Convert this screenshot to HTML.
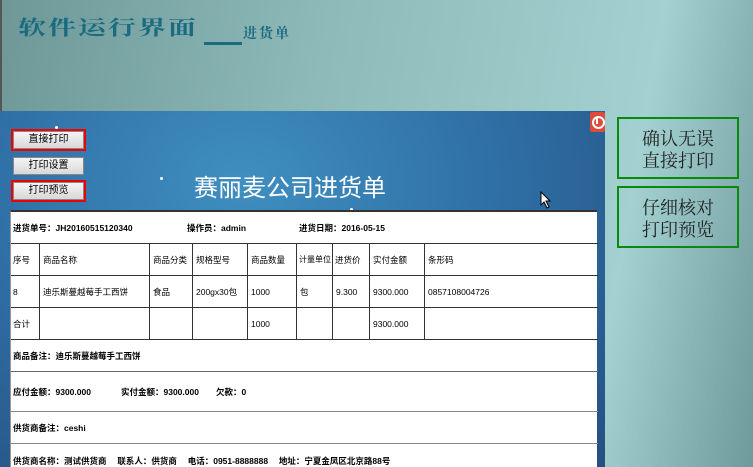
<!DOCTYPE html>
<html><head><meta charset="utf-8"><style>
*{margin:0;padding:0;box-sizing:border-box}
body{width:753px;height:467px;overflow:hidden;position:relative;font-family:"Liberation Sans","Noto Sans CJK SC",sans-serif;background:linear-gradient(100deg,#6e9898 0%,#8fbaba 40%,#a3d0d0 80%,#6f9a9c 100%);}
.lb{position:absolute;left:0;top:0;width:2px;height:111px;background:#555}
.t1{position:absolute;left:18px;top:16px;font-size:28px;line-height:30px;font-weight:bold;color:#1a6a80;letter-spacing:2px;font-family:"Noto Serif CJK SC","Noto Sans CJK SC",serif;transform:scaleY(0.72);transform-origin:left top}
.ul{position:absolute;left:204px;top:42px;width:38px;height:3px;background:#1a6a80}
.t2{position:absolute;left:243px;top:25px;font-size:14px;line-height:16px;font-weight:bold;color:#1a6a80;letter-spacing:2px;font-family:"Noto Serif CJK SC",serif}
.panel{position:absolute;left:0;top:111px;width:605px;height:356px;background:radial-gradient(ellipse at 40% 20%,#3f8fc0 0%,#2f6fa5 50%,#254f80 100%)}
.btn{position:absolute;left:13px;width:71px;height:18px;background:linear-gradient(#f4f4f4,#d8d8d8);border:1px solid #888;font-size:10px;text-align:center;line-height:16px;color:#000}
.red{outline:2px solid #e00;outline-offset:0}
.title{position:absolute;left:194px;top:168px;font-size:24px;color:#fff}
.close{position:absolute;left:590px;top:112px;width:15px;height:20px;background:#e04a3a;border-radius:2px}
.close:after{content:"";position:absolute;left:2px;top:4px;width:9px;height:9px;border:2px solid #fff;border-radius:50%}
.close:before{content:"";position:absolute;left:6px;top:6px;width:2px;height:6px;background:#fff;z-index:2}
.sheet{position:absolute;left:10px;top:210px;width:587px;height:257px;background:#fff;border-top:2px solid #333;border-left:1px solid #999}
.hl{position:absolute;left:0;width:587px;height:1px;background:#333}
.vl{position:absolute;top:33px;height:96px;width:1px;background:#333}
.tx{position:absolute;font-size:8.5px;line-height:10px;color:#000;white-space:nowrap}
.b{font-weight:bold}
.gb{position:absolute;left:617px;width:122px;border:2px solid #0a8a0a;font-size:18px;color:#222;text-align:center;line-height:22px;font-family:"Noto Serif CJK SC",serif}
.dot{position:absolute;width:3px;height:3px;background:#fff;border-radius:50%}
</style></head><body>
<div class="lb"></div>
<div class="t1">软件运行界面</div><div class="ul"></div><div class="t2">进货单</div>
<div class="panel"></div>
<div class="dot" style="left:55px;top:126px"></div>
<div class="dot" style="left:160px;top:177px"></div>
<div class="dot" style="left:350px;top:208px"></div>
<div class="btn red" style="top:131px">直接打印</div>
<div class="btn" style="top:157px">打印设置</div>
<div class="btn red" style="top:182px">打印预览</div>
<div class="title">赛丽麦公司进货单</div>
<div class="close"></div>
<svg style="position:absolute;left:540px;top:191px" width="12" height="18"><path d="M1 1 L1 14 L4 11 L7 17 L9 16 L6 10 L10 10 Z" fill="#fff" stroke="#000" stroke-width="1"/></svg>
<div class="sheet">
<div class="hl" style="top:31px"></div>
<div class="hl" style="top:63px"></div>
<div class="hl" style="top:95px"></div>
<div class="hl" style="top:127px"></div>
<div class="hl" style="top:159px;background:#666"></div>
<div class="hl" style="top:199px;background:#888"></div>
<div class="hl" style="top:231px;background:#888"></div>
<div class="vl" style="left:28px;top:31px"></div>
<div class="vl" style="left:138px;top:31px"></div>
<div class="vl" style="left:181px;top:31px"></div>
<div class="vl" style="left:236px;top:31px"></div>
<div class="vl" style="left:285px;top:31px"></div>
<div class="vl" style="left:321px;top:31px"></div>
<div class="vl" style="left:358px;top:31px"></div>
<div class="vl" style="left:413px;top:31px"></div>
<div class="tx b" style="left:2px;top:11px">进货单号：JH20160515120340</div>
<div class="tx b" style="left:176px;top:11px">操作员：admin</div>
<div class="tx b" style="left:288px;top:11px">进货日期：2016-05-15</div>
<div class="tx" style="left:2px;top:43px">序号</div>
<div class="tx" style="left:32px;top:43px">商品名称</div>
<div class="tx" style="left:142px;top:43px">商品分类</div>
<div class="tx" style="left:185px;top:43px">规格型号</div>
<div class="tx" style="left:240px;top:43px">商品数量</div>
<div class="tx" style="left:288px;top:43px;font-size:8px">计量单位</div>
<div class="tx" style="left:324px;top:43px">进货价</div>
<div class="tx" style="left:362px;top:43px">实付金额</div>
<div class="tx" style="left:417px;top:43px">条形码</div>
<div class="tx" style="left:2px;top:75px">8</div>
<div class="tx" style="left:32px;top:75px">迪乐斯蔓越莓手工西饼</div>
<div class="tx" style="left:142px;top:75px">食品</div>
<div class="tx" style="left:185px;top:75px">200gx30包</div>
<div class="tx" style="left:240px;top:75px">1000</div>
<div class="tx" style="left:289px;top:75px">包</div>
<div class="tx" style="left:325px;top:75px">9.300</div>
<div class="tx" style="left:362px;top:75px">9300.000</div>
<div class="tx" style="left:417px;top:75px">0857108004726</div>
<div class="tx" style="left:2px;top:107px">合计</div>
<div class="tx" style="left:240px;top:107px">1000</div>
<div class="tx" style="left:362px;top:107px">9300.000</div>
<div class="tx b" style="left:2px;top:139px">商品备注：迪乐斯蔓越莓手工西饼</div>
<div class="tx b" style="left:2px;top:175px">应付金额：9300.000</div>
<div class="tx b" style="left:110px;top:175px">实付金额：9300.000</div>
<div class="tx b" style="left:205px;top:175px">欠款：0</div>
<div class="tx b" style="left:2px;top:211px">供货商备注：ceshi</div>
<div class="tx b" style="left:2px;top:244px">供货商名称：测试供货商　 联系人：供货商　 电话：0951-8888888　 地址：宁夏金凤区北京路88号</div>
</div>
<div class="gb" style="top:117px;height:62px;padding-top:8px">确认无误<br>直接打印</div>
<div class="gb" style="top:186px;height:62px;padding-top:8px">仔细核对<br>打印预览</div>
</body></html>
